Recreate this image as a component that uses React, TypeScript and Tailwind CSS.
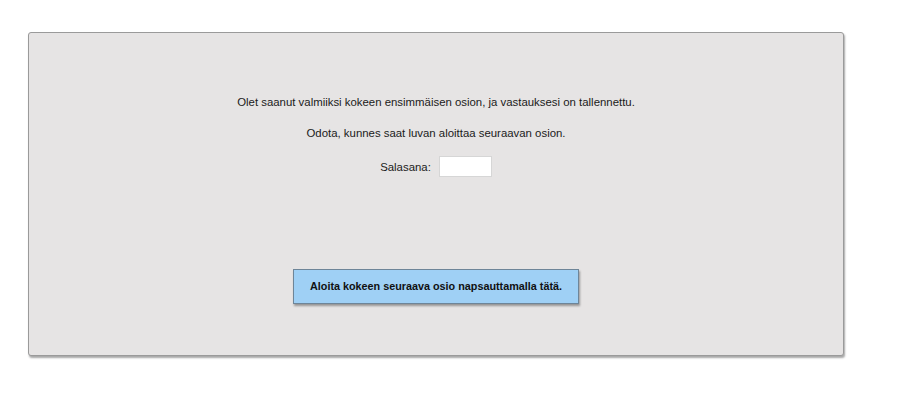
export default function App() {
  return (
    <div className="min-h-screen w-full bg-white pt-8 pl-[28px] font-['Liberation_Sans',Arial,sans-serif] text-[#1a1a1a]">
      <div className="flex h-[324px] w-[816px] flex-col items-center rounded-[3px] border border-[#9a9a9a] bg-[#e6e4e4] shadow-[1px_2px_2px_rgba(0,0,0,0.35)]">
        <p className="mt-[61px] h-4 text-[11.4px] leading-4">
          Olet saanut valmiiksi kokeen ensimmäisen osion, ja vastauksesi on tallennettu.
        </p>
        <p className="mt-[15px] h-4 text-[11.4px] leading-4">
          Odota, kunnes saat luvan aloittaa seuraavan osion.
        </p>
        <div className="mt-[15px] flex items-center gap-2">
          <label className="text-[11.4px] leading-4">Salasana:</label>
          <input
            type="password"
            className="h-[21px] w-[53px] border border-[#d6d6d6] bg-white outline-none"
          />
        </div>
        <button className="mt-[92px] h-[35px] w-[286px] border border-[#6e8598] bg-[#9fd0f5] text-[10.8px] font-bold text-[#111] shadow-[1px_2px_2px_rgba(0,0,0,0.35)]">
          Aloita kokeen seuraava osio napsauttamalla tätä.
        </button>
      </div>
    </div>
  );
}
